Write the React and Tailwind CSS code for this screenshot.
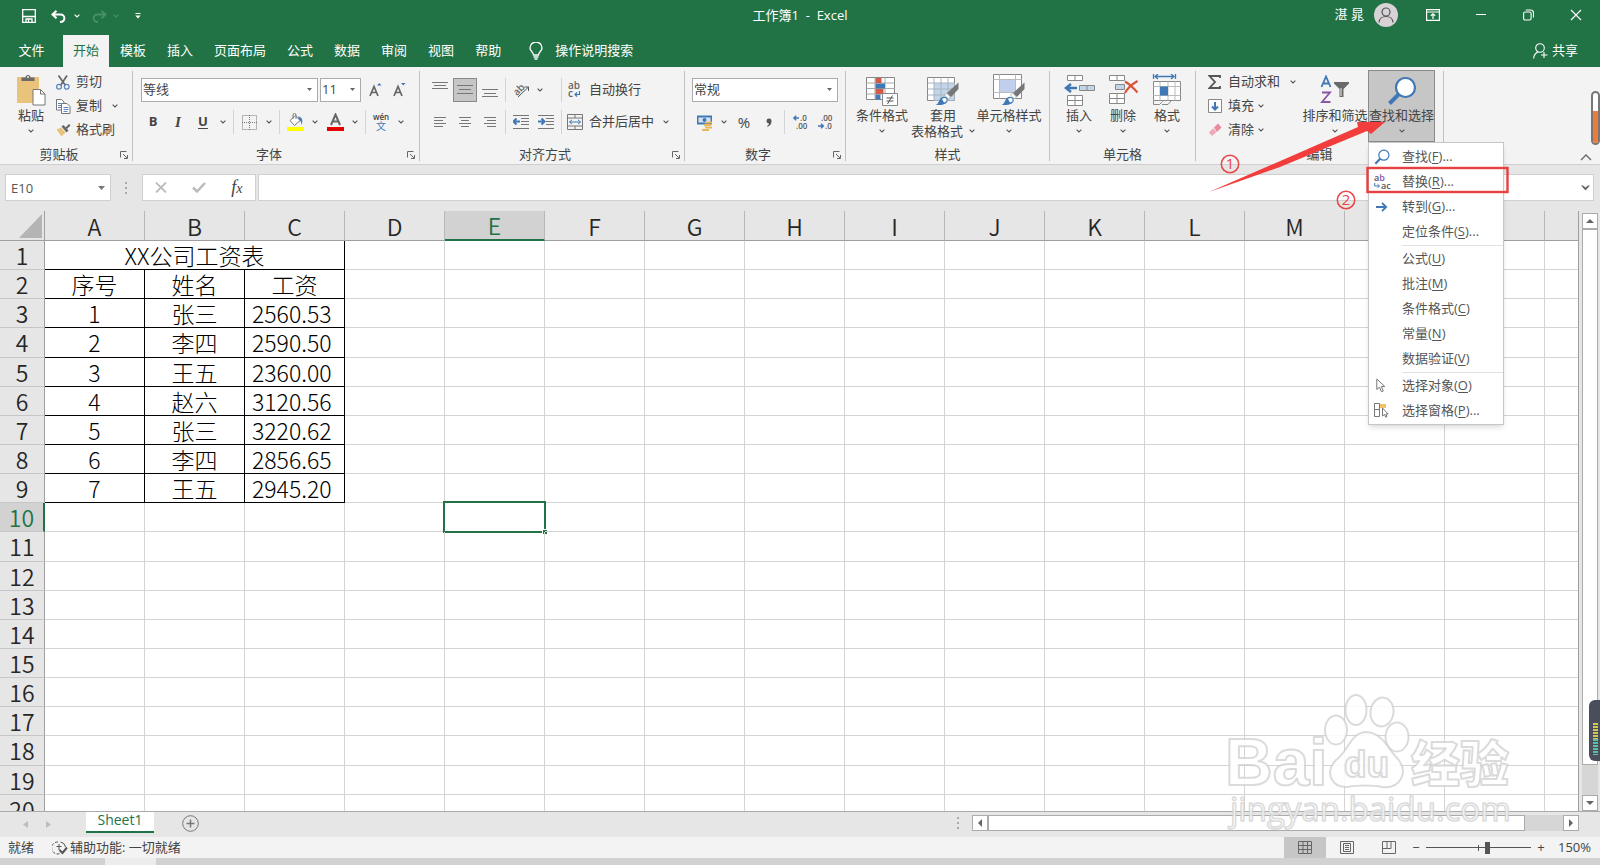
import React, { useState } from 'react';

const tabs = ['开始', '模板', '插入', '页面布局', '公式', '数据', '审阅', '视图', '帮助'];
const columns = ['A', 'B', 'C', 'D', 'E', 'F', 'G', 'H', 'I', 'J', 'K', 'L', 'M', 'N', 'O', 'P'];
const rowNumbers = Array.from({ length: 20 }, (_, i) => i + 1);

const salaries = [
  ['序号', '姓名', '工资'],
  ['1', '张三', '2560.53'],
  ['2', '李四', '2590.50'],
  ['3', '王五', '2360.00'],
  ['4', '赵六', '3120.56'],
  ['5', '张三', '3220.62'],
  ['6', '李四', '2856.65'],
  ['7', '王五', '2945.20'],
];

const menuSections = [
  [
    { label: '查找', hotkey: 'F', dots: true, icon: 'find' },
    { label: '替换', hotkey: 'R', dots: true, icon: 'replace' },
    { label: '转到', hotkey: 'G', dots: true, icon: 'goto' },
    { label: '定位条件', hotkey: 'S', dots: true },
  ],
  [
    { label: '公式', hotkey: 'U' },
    { label: '批注', hotkey: 'M' },
    { label: '条件格式', hotkey: 'C' },
    { label: '常量', hotkey: 'N' },
    { label: '数据验证', hotkey: 'V' },
  ],
  [
    { label: '选择对象', hotkey: 'O', icon: 'pointer' },
    { label: '选择窗格', hotkey: 'P', dots: true, icon: 'pane' },
  ],
];

/* ---------- small shared parts ---------- */

const Chevron = ({ className = 'text-[#555]' }) => (
  <svg width="6" height="4" viewBox="0 0 6 4" fill="none" stroke="currentColor" strokeWidth="1.1" className={className}>
    <path d="M.6.7 3 3 5.4.7" />
  </svg>
);

const ChevronButton = ({ label }) => (
  <button aria-label={label} className="flex h-6 w-3.5 items-center justify-center">
    <Chevron />
  </button>
);

const IconButton = ({ label, active, children }) => (
  <button
    aria-label={label}
    className={`flex h-6 w-6 items-center justify-center ${active ? 'border border-[#8a8a8a] bg-[#c6c6c6]' : ''}`}
  >
    {children}
  </button>
);

const Divider = () => <div className="mx-0.5 h-6 w-px bg-[#d4d4d4]" />;

const Picker = ({ label, value, className }) => (
  <div className={`relative h-6 ${className}`}>
    <select
      aria-label={label}
      defaultValue={value}
      className="h-6 w-full appearance-none border border-[#ababab] bg-white pl-px text-[13px] text-[#444]"
    >
      <option>{value}</option>
    </select>
    <svg width="5" height="3" viewBox="0 0 5 3" className="pointer-events-none absolute right-1.5 top-2.5 fill-[#666]">
      <path d="M0 0h5L2.5 3z" />
    </svg>
  </div>
);

const Group = ({ name, launcher, width, children }) => (
  <>
    <section className={`flex shrink-0 flex-col ${width}`}>
      <div className="h-[72px]">{children}</div>
      <div className="flex h-[22px] items-center pt-1">
        <div className="flex-1 text-center">{name}</div>
        {launcher && (
          <button aria-label={`${name}设置`} className="mr-0.5 flex h-3 w-3 items-center justify-center">
            <svg width="8" height="8" viewBox="0 0 8 8" fill="none" stroke="#666">
              <path d="M.5 6.500V.5H6.500M3 3l4 4M7.500 4v3.500H4" />
            </svg>
          </button>
        )}
      </div>
    </section>
    <div className="my-px h-[90px] w-px shrink-0 bg-[#c2c2c2]" />
  </>
);

const BigButton = ({ icon, label, second, width, active, onClick }) => (
  <button
    onClick={onClick}
    className={`flex h-[72px] flex-col items-center whitespace-nowrap ${width} ${active ? 'bg-[#c6c6c6] outline outline-1 -outline-offset-1 outline-[#8a8a8a]' : ''}`}
  >
    <span className="flex h-9 items-end">{icon}</span>
    <span className="h-[18px] leading-[18px]">{label}</span>
    {second ? (
      <span className="flex h-3.5 items-center gap-1.5 leading-[14px]">{second}<Chevron /></span>
    ) : (
      <span className="flex h-3.5 items-center"><Chevron /></span>
    )}
  </button>
);

const SmallButton = ({ icon, label, chevron }) => (
  <button className="flex h-6 items-center whitespace-nowrap">
    <span className="flex w-5 items-center justify-start">{icon}</span>
    {label}
    {chevron && <span className={chevron}><Chevron /></span>}
  </button>
);

/* ---------- icons ---------- */

const PasteIcon = () => (
  <svg width="30" height="32" viewBox="0 0 30 32">
    <rect x="1" y="3" width="22" height="26" fill="#e9c27b" />
    <path d="M5.500 7V3.500h4a2.500 2.500 0 0 1 5 0h4V7z" fill="#6a6a6a" />
    <circle cx="12" cy="3" r="1" fill="#f3f3f3" />
    <path d="M17 15.500h7.500l4.500 4.500v11H17z" fill="#fff" stroke="#777" />
    <path d="M24.500 15.500V20H29" fill="none" stroke="#777" />
  </svg>
);

const CutIcon = () => (
  <svg width="14" height="15" viewBox="0 0 14 15" fill="none">
    <path d="M2.500.5 9.500 10.500M11 .5 4.500 10.500" stroke="#666" strokeWidth="1.700" />
    <circle cx="3" cy="11.800" r="2.400" stroke="#5b85bd" strokeWidth="1.200" />
    <circle cx="10.700" cy="11.800" r="2.400" stroke="#5b85bd" strokeWidth="1.200" />
  </svg>
);

const CopyIcon = () => (
  <svg width="15" height="15" viewBox="0 0 15 15" fill="#fff" stroke="#777">
    <path d="M.5.5h5l2.500 2.500v8h-7.500z" />
    <path d="M2 4.500h4M2 6.500h4M2 8.500h3" stroke="#5b85bd" />
    <path d="M5.500 4.500h5.500l3 3v7H5.500z" />
    <path d="M7.500 8.500h5M7.500 10.500h5M7.500 12.500h4" stroke="#5b85bd" />
  </svg>
);

const PainterIcon = () => (
  <svg width="15" height="14" viewBox="0 0 15 14">
    <path d="M.5 6.500 5 4.500l4.500 5L5.500 13.500z" fill="#e9c27b" />
    <path d="m5.500 3.500 2-1.500 5 5.500-2 2z" fill="#666" />
    <path d="m9.500 4.500 3.500-3.500 1.500 1.500-3.500 3.500z" fill="#666" />
  </svg>
);

const GrowFont = ({ down }) => (
  <svg width="13" height="16" viewBox="0 0 13 16" fill="none">
    <path d="M1 14 5 4.500l4 9.500M2.500 10.500h5" stroke="#666" strokeWidth="1.700" />
    <path d={down ? 'M8 1h4.500L10.300 3.500z' : 'M8 3.500h4.500L10.300 1z'} fill="#3f78b5" />
  </svg>
);

const BorderIcon = () => (
  <svg width="15" height="15" viewBox="0 0 15 15" stroke="#777" strokeDasharray="1 1" fill="none">
    <path d="M.5.5h14v14H.5zM7.500 0v15M0 7.500h15" />
  </svg>
);

const FillIcon = () => (
  <svg width="17" height="18" viewBox="0 0 17 18">
    <path d="M3 7.500 8.500 2.500 13 7.500l-5.500 5z" fill="#fff" stroke="#777" />
    <path d="M6 6V2a1.500 1.500 0 0 1 3 0v4" fill="none" stroke="#777" />
    <path d="M11 3.500c4 .5 5.500 3.500 3.500 8.500-.5-3-1-4.500-2.500-5z" fill="#4a7ebb" />
    <path d="M0 14h17v4H0z" fill="#ffff00" />
  </svg>
);

const FontColorIcon = () => (
  <svg width="17" height="18" viewBox="0 0 17 18">
    <path d="M4 12 8.500 1.500 13 12M5.500 8.500h6" fill="none" stroke="#666" strokeWidth="2" />
    <path d="M0 14h17v4H0z" fill="#e50000" />
  </svg>
);

const AlignIcon = ({ lines }) => (
  <svg width="16" height="18" viewBox="0 0 16 18" stroke="#777">
    {lines.map(([x1, x2, y]) => <path key={y} d={`M${x1} ${y}.5H${x2}`} />)}
  </svg>
);

const IndentIcon = ({ right }) => (
  <svg width="16" height="16" viewBox="0 0 16 16" fill="none">
    <path d="M0 1.500h16M8 4.500h8M8 7.500h8M8 10.500h8M0 14.500h16" stroke="#777" />
    <path d={right ? 'M0 7.500h6M3.500 4.500l3 3-3 3' : 'M7 7.500H1M3.500 4.500l-3 3 3 3'} stroke="#3f78b5" strokeWidth="2" />
  </svg>
);

const OrientIcon = () => (
  <svg width="17" height="16" viewBox="0 0 17 16" className="overflow-visible">
    <text x="0" y="11" transform="rotate(-45 6 8)" fontSize="10" fontWeight="600" fill="#666">ab</text>
    <path d="M5 15 15.500 5M11.500 5h4v4" fill="none" stroke="#555" />
  </svg>
);

const WrapIcon = () => (
  <svg width="16" height="18" viewBox="0 0 16 18" className="overflow-visible">
    <text x="1" y="8" fontSize="10" fontWeight="600" fill="#666">ab</text>
    <text x="1" y="16" fontSize="10" fontWeight="600" fill="#666">c</text>
    <path d="M12.500 10v3.500H8M10 11.500l-2 2 2 2" fill="none" stroke="#3f78b5" strokeWidth="1.200" />
  </svg>
);

const MergeIcon = () => (
  <svg width="16" height="16" viewBox="0 0 16 16" fill="none" stroke="#777">
    <path d="M.5.5h15v15H.5zM.5 4h15M.5 12h15M8 .5V4M8 12v3.500" />
    <path d="M2.500 8h11M5 5.800 2.500 8 5 10.200M11 5.800 13.500 8 11 10.200" stroke="#3f78b5" />
  </svg>
);

const MoneyIcon = () => (
  <svg width="17" height="17" viewBox="0 0 17 17">
    <path d="M1 1.500h15v9H1z" fill="#3f78b5" />
    <path d="M2.500 3.500h12v5h-12z" fill="#d8e4f2" />
    <circle cx="8.500" cy="6" r="2" fill="#3f78b5" />
    <path d="M9 8.500h7M8 11h7M9 13.500h7M6 16h7" stroke="#e9b760" strokeWidth="1.800" />
  </svg>
);

const DecimalIcon = ({ less }) => (
  <svg width="15" height="18" viewBox="0 0 15 18" className="overflow-visible">
    <text x={less ? 3 : 7} y="8" fontSize="8" fontWeight="600" fill="#555">{less ? '.00' : '.0'}</text>
    <text x={less ? 7 : 3} y="16" fontSize="8" fontWeight="600" fill="#555">{less ? '.0' : '.00'}</text>
    <path
      d={less ? 'M0 13h5M3 10.700 5.300 13 3 15.300' : 'M6 5H1M3.200 2.700.9 5l2.300 2.300'}
      fill="none" stroke="#3f78b5" strokeWidth="1.500"
    />
  </svg>
);

const ConditionalIcon = () => (
  <svg width="32" height="30" viewBox="0 0 32 30">
    <path d="M.5 1.500h28v22H.5z" fill="#fff" stroke="#888" />
    <path d="M9 1.500v22M19 1.500v22M.5 7h28M.5 12.500h28M.5 18h28" stroke="#aaa" fill="none" />
    <path d="M9.500 2h6v5h-6zM9.500 13h8v5h-8z" fill="#d35b45" />
    <path d="M9.500 7.500H19v5H9.500zM9.500 18.500h5v5h-5z" fill="#3f78b5" />
    <path d="M16.500 17.500h15v12h-15z" fill="#fff" stroke="#888" />
    <path d="M20.500 22h7M20.500 25h7M26.500 19.500l-5 8.500" stroke="#555" fill="none" />
  </svg>
);

const Brush = () => (
  <>
    <path d="M31.500 8.500v6.500l-7.500 8-4-4z" fill="#777" />
    <path d="M19.500 19 23.500 23l-2 2-4-4z" fill="#fff" stroke="#888" strokeWidth=".6" />
    <path d="M8.500 31c3-1 3-4 5-6.500 2-2.500 6-2 7 .5 1 4-3 6.500-12 6z" fill="#3f78b5" />
    <path d="M15 25c2-1.500 4-1 4.500.5s-1 3-2.500 3z" fill="#fff" />
  </>
);

const TableFormatIcon = () => (
  <svg width="32" height="32" viewBox="0 0 32 32">
    <path d="M.5 3.500h27v23H.5z" fill="#fff" stroke="#888" />
    <path d="M7 9h20.500v17.500H7z" fill="#c3d5e8" />
    <path d="M7 3.500v23M14 3.500v23M21 3.500v23M.5 9h27M.5 15h27M.5 21h27" stroke="#a9b4c0" fill="none" />
    <Brush />
  </svg>
);

const CellStyleIcon = () => (
  <svg width="32" height="32" viewBox="0 0 32 32">
    <path d="M.5.5h28v24H.5z" fill="#fff" stroke="#888" />
    <path d="M6.500.5v24M22.500.5v24M.5 5.500h28M.5 18.500h28" stroke="#bbb" fill="none" />
    <path d="M7 6h15v12H7z" fill="#c0d0ec" />
    <Brush />
  </svg>
);

const InsertIcon = () => (
  <svg width="31" height="31" viewBox="0 0 31 31" fill="#fff" stroke="#888">
    <path d="M3.500.5h15v5h-15zM11 .5v5M3.500 20.500h15v10h-15zM11 20.500v10M3.500 25.500h15" />
    <path d="M15.500 10.500h15v5h-15zM23 10.500v5" fill="#c3d5e8" />
    <path d="M13 13H3M7 9l-5 4 5 4" fill="none" stroke="#3f78b5" strokeWidth="2.600" />
  </svg>
);

const DeleteIcon = () => (
  <svg width="31" height="31" viewBox="0 0 31 31" fill="#fff" stroke="#888">
    <path d="M1.500.5h15v5h-15zM9 .5v5M1.500 18.500h15v10h-15zM9 18.500v10M1.500 23.500h15" />
    <path d="M7.500 9.500h9v5h-9z" fill="#c3d5e8" />
    <path d="M17 6.500c5 3 9 7 12.500 11M29.500 6c-5 3-10 7-12.500 12" fill="none" stroke="#d9553a" strokeWidth="2.200" />
  </svg>
);

const FormatIcon = () => (
  <svg width="30" height="32" viewBox="0 0 30 32" fill="none">
    <path d="M1.500 0v5M23.500 0v5M3 2.500h19M6 0 3 2.500 6 5M19 0l3 2.500L19 5" stroke="#3f78b5" strokeWidth="1.300" />
    <path d="M1.500 7.500h27v19h-27z" fill="#fff" stroke="#888" />
    <path d="M8 7.500v19M16 7.500v19M23 7.500v19M1.500 12.500h27M1.500 21.500h27" stroke="#bbb" />
    <path d="M8 12.500h8v9H8z" fill="#3f78b5" />
    <path d="M1.500 27v3.500h6l3-3M10 30.500h6l3-3.500" stroke="#888" />
  </svg>
);

const SigmaIcon = () => (
  <svg width="13" height="14" viewBox="0 0 13 14" fill="none" stroke="#555" strokeWidth="1.800">
    <path d="M12 3V1H1.500l5.500 6-5.500 6H12v-2" />
  </svg>
);

const FillDownIcon = () => (
  <svg width="14" height="14" viewBox="0 0 14 14" fill="none">
    <path d="M.5.5h13v13H.5z" fill="#fff" stroke="#888" />
    <path d="M7 3v7M4 7.500l3 3 3-3" stroke="#3f78b5" strokeWidth="2" />
  </svg>
);

const EraserIcon = () => (
  <svg width="14" height="14" viewBox="0 0 14 14">
    <path d="M6 4.500 10 .5l3.500 4L9 9z" fill="#e8899c" />
    <path d="M5.300 5.200.8 9.500 4 13l4.500-4z" fill="#efa9b5" />
  </svg>
);

const SortIcon = () => (
  <svg width="30" height="31" viewBox="0 0 30 31" fill="none">
    <path d="M1.500 12 6 1.500 10.500 12M3 8.500h6" stroke="#3f78b5" strokeWidth="1.800" />
    <path d="M2 17.500h8L2 27h8.500" stroke="#8b54a8" strokeWidth="1.800" />
    <path d="M14 7h15v1.500L23.500 14v8h-4v-8L14 8.500z" fill="#6a6a6a" />
    <path d="M21 13v8" stroke="#eee" />
  </svg>
);

const Magnifier = ({ size }) => (
  <svg width={size} height={size} viewBox="0 0 30 30" fill="none">
    <path d="m12.500 17.500-10 10" stroke="#3f78b5" strokeWidth="4" />
    <circle cx="18.500" cy="11.500" r="9.500" fill="#fff" stroke="#3f78b5" strokeWidth="2.200" />
  </svg>
);

const menuIcons = {
  find: <Magnifier size={16} />,
  replace: (
    <svg width="17" height="18" viewBox="0 0 17 18" className="overflow-visible">
      <text x="0" y="8" fontSize="9" fontWeight="600" fill="#555">a<tspan fill="#8b54a8">b</tspan></text>
      <text x="7" y="16" fontSize="9" fontWeight="600" fill="#555">ac</text>
      <path d="M.7 10v3h4.500M3.500 11.200 5.500 13l-2 1.800" fill="none" stroke="#3f78b5" />
    </svg>
  ),
  goto: (
    <svg width="14" height="10" viewBox="-2 0 14 10" fill="none" stroke="#3f78b5" strokeWidth="1.800">
      <path d="M0 5h10M6 .8 10.200 5 6 9.200" />
    </svg>
  ),
  pointer: (
    <svg width="12" height="15" viewBox="-2 0 12 15" fill="#fff" stroke="#777">
      <path d="M.8 1v10.500l2.700-2.300 2 4.600 1.800-.8-2-4.500h3.500z" />
    </svg>
  ),
  pane: (
    <svg width="15" height="15" viewBox="0 0 15 15" fill="#fff" stroke="#777">
      <path d="M.5.5h5v6h-5zM.5 6.500h5v7h-5z" />
      <path d="M6 1h6v4H6z" fill="#f0c36a" stroke="none" />
      <path d="M8.500 5v8l2-1.500 1.200 2.700 1.300-.6-1.200-2.600h2.400z" />
    </svg>
  ),
};

/* ---------- title bar and tabs ---------- */

const TitleBar = () => (
  <header className="relative flex h-[35px] items-start justify-between bg-[#217346] text-white">
    <div className="flex h-8 items-center pl-[22px]">
      <button aria-label="保存">
        <svg width="14" height="14" viewBox="0 0 14 14" fill="none" stroke="#fff" strokeWidth="1.300">
          <path d="M.7.7h12.600v12.600H.7zM1 7.500h12M4 13v-3h6v3M6.500 10.500V13" />
        </svg>
      </button>
      <button aria-label="撤消" className="ml-[15px]">
        <svg width="15" height="13" viewBox="0 0 15 13" fill="none" stroke="#fff" strokeWidth="2">
          <path d="M5.500.8 1.500 4.500l4 3.800M2 4.500h7.500c5 0 5.500 7.500-.5 7.500" />
        </svg>
      </button>
      <button aria-label="撤消列表" className="ml-2"><Chevron className="text-white" /></button>
      <button aria-label="恢复" className="ml-3">
        <svg width="15" height="13" viewBox="0 0 15 13" fill="none" stroke="#4a8f69" strokeWidth="1.800">
          <path d="M9.500.8l4 3.700-4 3.800M13 4.500H5.500c-5 0-5.500 7.500.5 7.500" />
        </svg>
      </button>
      <button aria-label="恢复列表" className="ml-1.5"><Chevron className="text-[#4a8f69]" /></button>
      <button aria-label="自定义快速访问工具栏" className="ml-4">
        <svg width="6" height="6" viewBox="0 0 6 6" fill="#fff"><path d="M.5 0h5v1h-5zM.3 2.500h5.400L3 5.500z" /></svg>
      </button>
    </div>
    <h1 className="absolute inset-x-0 top-0 text-center text-[13px] leading-[30px]">
      工作簿1&nbsp; -&nbsp; Excel
    </h1>
    <div className="z-10 flex h-[30px] items-center pr-[18px]">
      <span className="text-[13px]">湛 晁</span>
      <button aria-label="账户" className="ml-2.5 flex h-6 w-6 items-center justify-center rounded-full bg-[#d8d3d6]">
        <svg width="16" height="16" viewBox="0 0 16 16" fill="none" stroke="#555" strokeWidth="1.200">
          <circle cx="8" cy="5" r="4" />
          <path d="M1 15.500c.5-8 13.500-8 14 0" />
        </svg>
      </button>
      <button aria-label="功能区显示选项" className="ml-7">
        <svg width="14" height="12" viewBox="0 0 14 12" fill="none" stroke="#fff" strokeWidth="1.200">
          <path d="M.6.6h12.800v10.800H.6zM.6 3h12.800M7 10V5M4.800 6.800 7 4.800l2.200 2" />
        </svg>
      </button>
      <button aria-label="最小化" className="ml-9">
        <svg width="10" height="12" viewBox="0 0 10 12" stroke="#fff"><path d="M0 5.500h10" /></svg>
      </button>
      <button aria-label="还原" className="ml-[37px]">
        <svg width="11" height="12" viewBox="0 0 11 12" fill="none" stroke="#fff" strokeWidth="1.100">
          <rect x=".6" y="3" width="7.500" height="8" rx="1.500" />
          <path d="M2.800 1h4.700a3 3 0 0 1 3 3v4.500" />
        </svg>
      </button>
      <button aria-label="关闭" className="ml-9">
        <svg width="12" height="12" viewBox="0 0 12 12" stroke="#fff" strokeWidth="1.200"><path d="m1 1 10 10M11 1 1 11" /></svg>
      </button>
    </div>
  </header>
);

const TabBar = () => {
  const [current, setCurrent] = useState('开始');

  return (
    <nav className="flex h-8 items-stretch bg-[#217346] text-[13px] text-white">
      <button className="w-[63px]">文件</button>
      <div className="flex gap-px">
        {tabs.map(tab => (
          <button
            key={tab}
            onClick={() => setCurrent(tab)}
            className={`px-2.5 ${current === tab ? 'bg-[#f3f3f3] text-[#217346]' : ''}`}
          >
            {tab}
          </button>
        ))}
      </div>
      <button className="ml-[18px] flex items-center gap-3">
        <svg width="14" height="18" viewBox="0 0 14 18" fill="none" stroke="#fff" strokeWidth="1.300">
          <path d="M4.500 13c0-3-3.500-3.500-3.500-7a6 6 0 0 1 12 0c0 3.500-3.500 4-3.500 7zM4.500 15h5M5.500 17h3" />
        </svg>
        操作说明搜索
      </button>
      <button className="ml-auto mr-[22px] flex items-center gap-1">
        <svg width="15" height="16" viewBox="0 0 15 16" fill="none" stroke="#fff" strokeWidth="1.100">
          <circle cx="7" cy="5" r="4.300" />
          <path d="M.6 15.500C1 11.500 3 9.800 5 9M11 9v6M8 12h6.500" />
        </svg>
        共享
      </button>
    </nav>
  );
};

/* ---------- find menu and annotations ---------- */

const FindMenu = () => (
  <div
    role="menu"
    className="absolute left-0 top-full z-20 w-[136px] border border-[#c6c6c6] bg-white py-px text-[#555] shadow-md"
  >
    {menuSections.map((items, i) => (
      <div key={i}>
        {i > 0 && <div className="mt-px ml-[33px] h-px bg-[#e1e1e1]" />}
        {items.map(item => (
          <button key={item.label} role="menuitem" className="flex h-[25px] w-full items-center whitespace-nowrap">
            <span className="flex w-[33px] items-center pl-[5px]">{item.icon && menuIcons[item.icon]}</span>
            <span>{item.label}(<u className="underline-offset-2">{item.hotkey}</u>){item.dots && '...'}</span>
          </button>
        ))}
      </div>
    ))}
  </div>
);

const Annotations = () => (
  <svg
    width="310" height="140" viewBox="0 0 310 140"
    className="pointer-events-none absolute -left-[168px] top-0 z-30"
  >
    <path d="M9 122 158 57l-1-5 28 0-14 12-4-3L80 97z" fill="#f23d3d" />
    <circle cx="30" cy="94" r="8.700" fill="none" stroke="#e84545" strokeWidth="1.500" />
    <text x="30" y="99" textAnchor="middle" fontSize="15" fill="#e84545">1</text>
    <circle cx="146" cy="130" r="8.700" fill="none" stroke="#e84545" strokeWidth="1.500" />
    <text x="146" y="135" textAnchor="middle" fontSize="15" fill="#e84545">2</text>
    <rect x="167.500" y="98" width="140" height="24" fill="none" stroke="#e84040" strokeWidth="2.400" />
  </svg>
);

/* ---------- ribbon ---------- */

const Ribbon = () => {
  const [menuOpen, setMenuOpen] = useState(true);

  return (
    <div className="relative flex border-b border-[#d0d0d0] bg-[#f3f3f3] pt-[3px] text-[13px] text-[#444]">
      <Group name="剪贴板" launcher width="w-[132px]">
        <div className="flex pl-1.5">
          <BigButton icon={<PasteIcon />} label="粘贴" width="w-[50px]" />
          <div className="flex flex-col">
            <SmallButton icon={<CutIcon />} label="剪切" />
            <SmallButton icon={<CopyIcon />} label="复制" chevron="ml-2.5" />
            <SmallButton icon={<PainterIcon />} label="格式刷" />
          </div>
        </div>
      </Group>

      <Group name="字体" launcher width="w-[286px]">
        <div className="flex flex-col gap-2 pl-2 pt-2">
          <div className="flex items-center">
            <Picker label="字体" value="等线" className="w-[177px]" />
            <Picker label="字号" value="11" className="ml-0.5 w-[41px]" />
            <button aria-label="增大字号" className="ml-2 w-6"><GrowFont /></button>
            <button aria-label="减小字号" className="w-6"><GrowFont down /></button>
          </div>
          <div className="flex items-center gap-px">
            <IconButton label="加粗"><b>B</b></IconButton>
            <IconButton label="倾斜"><b className="font-['Liberation_Serif',serif] text-[15px] italic">I</b></IconButton>
            <IconButton label="下划线"><b className="underline underline-offset-2">U</b></IconButton>
            <ChevronButton label="下划线选项" />
            <Divider />
            <IconButton label="边框"><BorderIcon /></IconButton>
            <ChevronButton label="边框选项" />
            <Divider />
            <IconButton label="填充颜色"><FillIcon /></IconButton>
            <ChevronButton label="填充颜色选项" />
            <IconButton label="字体颜色"><FontColorIcon /></IconButton>
            <ChevronButton label="字体颜色选项" />
            <Divider />
            <IconButton label="拼音">
              <span className="flex flex-col items-center">
                <span className="text-[8px] font-semibold leading-[8px]">wén</span>
                <span className="text-[10px] leading-[10px] text-[#3f78b5]">文</span>
              </span>
            </IconButton>
            <ChevronButton label="拼音选项" />
          </div>
        </div>
      </Group>

      <Group name="对齐方式" launcher width="w-[264px]">
        <div className="flex flex-col gap-2 pl-2 pt-2">
          <div className="flex items-center gap-px">
            <IconButton label="顶端对齐"><AlignIcon lines={[[0, 16, 1], [2, 14, 4], [0, 16, 7]]} /></IconButton>
            <IconButton label="垂直居中" active><AlignIcon lines={[[0, 16, 4], [2, 14, 8], [0, 16, 12]]} /></IconButton>
            <IconButton label="底端对齐"><AlignIcon lines={[[0, 16, 8], [2, 14, 12], [0, 16, 15]]} /></IconButton>
            <Divider />
            <div className="flex w-[49px]">
              <IconButton label="方向"><OrientIcon /></IconButton>
              <ChevronButton label="方向选项" />
            </div>
            <Divider />
            <button className="flex items-center gap-1.5 pl-0.5"><WrapIcon />自动换行</button>
          </div>
          <div className="flex items-center gap-px">
            <IconButton label="左对齐"><AlignIcon lines={[[2, 14, 4], [2, 11, 7], [2, 14, 10], [2, 11, 13]]} /></IconButton>
            <IconButton label="居中"><AlignIcon lines={[[2, 14, 4], [4, 12, 7], [2, 14, 10], [4, 12, 13]]} /></IconButton>
            <IconButton label="右对齐"><AlignIcon lines={[[2, 14, 4], [5, 14, 7], [2, 14, 10], [5, 14, 13]]} /></IconButton>
            <Divider />
            <IconButton label="减少缩进量"><IndentIcon /></IconButton>
            <IconButton label="增加缩进量"><IndentIcon right /></IconButton>
            <Divider />
            <button className="flex items-center gap-1.5 pl-0.5"><MergeIcon />合并后居中</button>
            <div className="pl-1"><ChevronButton label="合并选项" /></div>
          </div>
        </div>
      </Group>

      <Group name="数字" launcher width="w-[160px]">
        <div className="flex flex-col gap-2 pl-[7px] pt-2">
          <Picker label="数字格式" value="常规" className="w-[146px]" />
          <div className="flex items-center gap-px">
            <IconButton label="会计数字格式"><MoneyIcon /></IconButton>
            <ChevronButton label="会计数字格式选项" />
            <IconButton label="百分比样式"><span className="text-[15px]">%</span></IconButton>
            <IconButton label="千位分隔样式">
              <svg width="6" height="9" viewBox="0 0 6 9" fill="#555"><path d="M5.500 3.200C5.500 6 4 8 1.200 8.700L1 8c1.500-.8 2-1.600 2-2.500C1.500 5.500.5 4.500.5 3a2.500 2.500 0 0 1 5 .2z" /></svg>
            </IconButton>
            <Divider />
            <IconButton label="增加小数位数"><DecimalIcon /></IconButton>
            <IconButton label="减少小数位数"><DecimalIcon less /></IconButton>
          </div>
        </div>
      </Group>

      <Group name="样式" width="w-[203px]">
        <div className="flex pl-[7px]">
          <BigButton icon={<ConditionalIcon />} label="条件格式" width="w-[58px]" />
          <BigButton icon={<TableFormatIcon />} label="套用" second="表格格式" width="w-[64px]" />
          <BigButton icon={<CellStyleIcon />} label="单元格样式" width="w-[68px]" />
        </div>
      </Group>

      <Group name="单元格" width="w-[145px]">
        <div className="flex pl-[7px]">
          <BigButton icon={<InsertIcon />} label="插入" width="w-11" />
          <BigButton icon={<DeleteIcon />} label="删除" width="w-11" />
          <BigButton icon={<FormatIcon />} label="格式" width="w-11" />
        </div>
      </Group>

      <Group name="编辑" width="w-[247px]">
        <div className="flex pl-3">
          <div className="flex w-[94px] flex-col items-start">
            <SmallButton icon={<SigmaIcon />} label="自动求和" chevron="ml-2.5" />
            <SmallButton icon={<FillDownIcon />} label="填充" chevron="ml-1" />
            <SmallButton icon={<EraserIcon />} label="清除" chevron="ml-1" />
          </div>
          <BigButton icon={<SortIcon />} label="排序和筛选" width="w-[66px]" />
          <div className="relative">
            <BigButton
              icon={<Magnifier size={30} />}
              label="查找和选择"
              width="w-[67px]"
              active={menuOpen}
              onClick={() => setMenuOpen(!menuOpen)}
            />
            {menuOpen && <FindMenu />}
            <Annotations />
          </div>
        </div>
      </Group>

      <div className="flex flex-1 items-end justify-end pb-[3px] pr-2">
        <button aria-label="折叠功能区">
          <svg width="12" height="7" viewBox="0 0 12 7" fill="none" stroke="#666" strokeWidth="1.300"><path d="M1 6l5-5 5 5" /></svg>
        </button>
      </div>
      <div className="absolute right-0 top-6 flex h-[54px] w-[9px] items-end rounded-md border-2 border-[#777] bg-white">
        <div className="h-8 w-full rounded-b-sm bg-[#ee7b36]" />
      </div>
    </div>
  );
};

/* ---------- formula bar ---------- */

const FormulaBar = () => (
  <div className="flex items-center bg-[#e6e6e6] pb-2.5 pl-[5px] pr-1.5 pt-[9px]">
    <div className="relative w-[106px]">
      <input
        aria-label="名称框"
        defaultValue="E10"
        className="h-[27px] w-full border border-[#d0d0d0] bg-white pl-[5px] text-[13px] text-[#555]"
      />
      <svg width="7" height="4" viewBox="0 0 7 4" className="absolute right-1.5 top-3 fill-[#777]"><path d="M0 0h7L3.500 4z" /></svg>
    </div>
    <svg width="3" height="12" viewBox="0 0 3 12" className="mx-3.5 fill-[#aaa]">
      <path d="M0 0h2v2H0zM0 5h2v2H0zM0 10h2v2H0z" />
    </svg>
    <div className="flex h-[27px] w-[114px] items-center justify-around border border-[#d0d0d0] bg-white">
      <button aria-label="取消">
        <svg width="12" height="11" viewBox="0 0 12 11" stroke="#bbb" strokeWidth="1.800"><path d="m1 .5 10 10M11 .5l-10 10" /></svg>
      </button>
      <button aria-label="输入">
        <svg width="14" height="11" viewBox="0 0 14 11" fill="none" stroke="#bbb" strokeWidth="2.500"><path d="m1 5.500 4 4L13 1" /></svg>
      </button>
      <button aria-label="插入函数" className="font-['Liberation_Serif',serif] text-[18px] italic leading-5 text-[#444]">
        f<span className="text-[14px]">x</span>
      </button>
    </div>
    <div className="relative ml-0.5 flex-1">
      <input aria-label="编辑栏" className="h-[27px] w-full border border-[#d0d0d0] bg-white px-2 text-[13px]" />
      <svg width="9" height="6" viewBox="0 0 9 6" className="absolute right-1 top-[11px] fill-[#666]"><path d="M0 .5h2l2.500 2L7 .5h2L4.500 5.500z" /></svg>
    </div>
  </div>
);

/* ---------- worksheet ---------- */

const blackEdge = 'border-r border-b border-black';
const greyEdge = 'border-r border-b border-[#d4d4d4]';

const SheetRow = ({ number }) => {
  const record = salaries[number - 2];
  const selectedRow = number === 10;
  const rest = columns.slice(number <= 9 ? 3 : 0);

  return (
    <tr className="align-top">
      <th
        className={`border-b p-0 text-center font-[350] ${
          selectedRow
            ? 'border-r-2 border-b-[#c6c6c6] border-r-[#217346] bg-[#d2d2d2] text-[#217346]'
            : 'border-r border-b-[#c6c6c6] border-r-[#9f9f9f] bg-[#e6e6e6] text-[#262626]'
        }`}
      >
        {number}
      </th>
      {number === 1 && <td colSpan={3} className={`p-0 text-center ${blackEdge}`}>XX公司工资表</td>}
      {record && record.map((value, i) => (
        <td
          key={i}
          className={`p-0 ${blackEdge} ${i === 2 && number > 2 ? 'pl-[7px] text-left' : 'text-center'}`}
        >
          {value}
        </td>
      ))}
      {rest.map(col => (
        <td key={col} className={`relative p-0 ${greyEdge}`}>
          {selectedRow && col === 'E' && (
            <div className="absolute -inset-x-0.5 -bottom-0.5 -top-0.5 border-2 border-[#217346]">
              <div className="absolute -bottom-[3px] -right-[3px] h-[5px] w-[5px] border-l border-t border-white bg-[#217346]" />
            </div>
          )}
        </td>
      ))}
    </tr>
  );
};

const Sheet = () => (
  <div className="flex-1 overflow-hidden border-r border-[#9f9f9f]">
    <table className="h-[613px] w-[1645px] table-fixed border-separate border-spacing-0 bg-white font-['Noto_Sans_CJK_SC',sans-serif] text-[23px] font-light leading-7 text-black">
      <thead>
        <tr className="h-[30px]">
          <th className="w-[45px] border-b border-r border-[#9f9f9f] bg-[#e6e6e6] p-0">
            <svg width="23" height="24" viewBox="0 0 23 24" className="ml-auto mr-0.5 fill-[#b4b4b4]"><path d="M23 0v24H0z" /></svg>
          </th>
          {columns.map(col => (
            <th
              key={col}
              className={`w-[100px] border-r p-0 font-[350] ${
                col === 'E'
                  ? 'border-b-2 border-b-[#217346] border-r-[#b8b8b8] bg-[#d2d2d2] text-[#217346]'
                  : 'border-b border-b-[#9f9f9f] border-r-[#b8b8b8] bg-[#e6e6e6] text-[#262626]'
              }`}
            >
              {col}
            </th>
          ))}
        </tr>
      </thead>
      <tbody>
        {rowNumbers.map(n => <SheetRow key={n} number={n} />)}
      </tbody>
    </table>
  </div>
);

const ScrollButton = ({ label, path }) => (
  <button aria-label={label} className="flex h-4 w-4 shrink-0 items-center justify-center border border-[#ababab] bg-white">
    <svg width="8" height="8" viewBox="0 0 8 8" fill="#666"><path d={path} /></svg>
  </button>
);

const VerticalScroll = () => (
  <div className="flex w-[21px] flex-col items-center bg-[#e6e6e6] pt-0.5">
    <ScrollButton label="向上滚动" path="M0 6 4 2l4 4z" />
    <div className="flex w-4 flex-1 flex-col bg-[#d6d6d6]">
      <div className="w-full flex-[18] border border-[#ababab] bg-white" />
      <div className="flex-1" />
    </div>
    <ScrollButton label="向下滚动" path="M0 2h8L4 6z" />
  </div>
);

const Watermark = () => (
  <svg
    width="300" height="150" viewBox="0 0 300 150"
    className="pointer-events-none absolute bottom-0 right-[76px] z-10"
    fill="#fff" fillOpacity=".85" stroke="#cccccc" strokeOpacity=".7" strokeWidth="2" strokeLinejoin="round"
  >
    <text x="1" y="98" fontSize="66" fontWeight="bold" className="font-['Liberation_Sans',sans-serif]">Bai</text>
    <ellipse cx="112" cy="43" rx="11" ry="14.500" />
    <ellipse cx="132" cy="23" rx="10.500" ry="15" />
    <ellipse cx="158" cy="25" rx="11.500" ry="14.500" transform="rotate(8 158 25)" />
    <ellipse cx="173" cy="50" rx="11.500" ry="14.500" />
    <path d="M142 45c-16 1-18 20-30 28-12 13-4 28 12 27 8-2 26-2 34 0 18 2 27-14 16-28-10-9-14-26-32-27z" />
    <text x="120" y="90" fontSize="37" fontWeight="bold" className="font-['Liberation_Sans',sans-serif]">du</text>
    <text x="187" y="95" fontSize="49" fontWeight="900" className="font-['Noto_Sans_CJK_SC',sans-serif]">经验</text>
    <text x="6" y="134" fontSize="33" strokeWidth="1.600" className="font-['Open_Sans',sans-serif]">jingyan.baidu.com</text>
  </svg>
);

/* ---------- bottom bars ---------- */

const SheetTabs = () => (
  <div className="flex h-[26px] items-start border-t border-[#ababab] bg-[#e6e6e6]">
    <div className="flex h-6 w-[86px] items-center gap-[18px] pl-[23px]">
      <button aria-label="上一张"><svg width="5" height="7" viewBox="0 0 5 7" fill="#bdbdbd"><path d="M5 0v7L0 3.500z" /></svg></button>
      <button aria-label="下一张"><svg width="5" height="7" viewBox="0 0 5 7" fill="#bdbdbd"><path d="M0 0v7l5-3.500z" /></svg></button>
    </div>
    <button className="h-[21px] w-[68px] border-b-2 border-[#217346] bg-white pb-1 text-[14px] leading-4 text-[#217346]">Sheet1</button>
    <button aria-label="新工作表" className="ml-7 mt-[3px]">
      <svg width="17" height="17" viewBox="0 0 17 17" fill="none" stroke="#777"><circle cx="8.500" cy="8.500" r="7.800" /><path d="M8.500 4.500v8M4.500 8.500h8" strokeWidth="1.500" /></svg>
    </button>
    <div className="ml-auto flex items-center pr-[21px] pt-[3px]">
      <svg width="3" height="12" viewBox="0 0 3 12" className="mr-3 fill-[#aaa]">
        <path d="M0 0h2v2H0zM0 5h2v2H0zM0 10h2v2H0z" />
      </svg>
      <ScrollButton label="向左滚动" path="M6 0v8L2 4z" />
      <div className="flex h-4 w-[575px] bg-[#d6d6d6]">
        <div className="w-[537px] border border-[#ababab] bg-white" />
      </div>
      <ScrollButton label="向右滚动" path="M2 0v8l4-4z" />
    </div>
  </div>
);

const StatusBar = () => (
  <footer className="flex h-[21px] items-center bg-[#f3f3f3] text-[13px] text-[#444]">
    <span className="pl-2">就绪</span>
    <svg width="16" height="14" viewBox="0 0 16 14" fill="none" stroke="#555" className="ml-[18px]">
      <path d="M6 1a6 6 0 1 0 2 11.500" strokeDasharray="3 1.500" />
      <path d="M8.500 1a6 6 0 0 1 5 5M7 3v6M4.500 5.500h5" />
      <path d="m7.500 9 3 3L15 6.500" strokeWidth="2" />
    </svg>
    <span className="ml-0.5">辅助功能: 一切就绪</span>
    <div className="ml-auto flex h-full items-center">
      <button aria-label="普通" className="flex h-full w-[42px] items-center justify-center bg-[#c6c6c6]">
        <svg width="14" height="13" viewBox="0 0 14 13" fill="none" stroke="#666"><path d="M.5.5h13v12H.5zM5 .5v12M9.500.5v12M.5 4.500h13M.5 8.500h13" /></svg>
      </button>
      <button aria-label="页面布局" className="flex h-full w-[42px] items-center justify-center">
        <svg width="14" height="13" viewBox="0 0 14 13" fill="none" stroke="#666"><path d="M.5.5h13v12H.5zM3.500 2.500h7v8h-7zM5 4.500h4M5 6.500h4M5 8.500h4" /></svg>
      </button>
      <button aria-label="分页预览" className="flex h-full w-[42px] items-center justify-center">
        <svg width="14" height="13" viewBox="0 0 14 13" fill="none" stroke="#666"><path d="M.5.5h13v12H.5zM5 .5v7H.5M9 .5v7H5" /></svg>
      </button>
      <button aria-label="缩小" className="w-3 text-[#444]">−</button>
      <div className="relative mx-1 flex h-4 w-[105px] items-center">
        <div className="h-px w-full bg-[#555]" />
        <div className="absolute left-1/2 h-1.5 w-px bg-[#555]" />
        <div className="absolute left-[59px] h-3 w-[5px] bg-[#555]" />
      </div>
      <button aria-label="放大" className="w-3">+</button>
      <span className="ml-[11px] pr-[9px]">150%</span>
    </div>
  </footer>
);

const App = () => (
  <div className="flex h-screen flex-col overflow-hidden bg-[#e6e6e6] font-['Open_Sans','Noto_Sans_CJK_SC',sans-serif]">
    <TitleBar />
    <TabBar />
    <Ribbon />
    <FormulaBar />
    <main className="relative flex min-h-0 flex-1">
      <Sheet />
      <VerticalScroll />
      <div className="absolute bottom-[50px] right-0 flex h-[61px] w-[11px] flex-col justify-end rounded-l-md bg-[#4a4d5c] pb-1.5 pl-1 pr-0.5">
        <div className="h-4 bg-[repeating-linear-gradient(#d0c850_0_2px,#4a4d5c_2px_3px)]" />
        <div className="h-4 bg-[repeating-linear-gradient(#5cc0a0_0_2px,#4a4d5c_2px_3px)]" />
      </div>
    </main>
    <div className="relative">
      <SheetTabs />
      <Watermark />
    </div>
    <StatusBar />
    <div className="flex h-[7px] bg-[#d2d2d2]">
      <div className="ml-[105px] w-[51px] bg-[#ececec]" />
    </div>
  </div>
);

export default App;
